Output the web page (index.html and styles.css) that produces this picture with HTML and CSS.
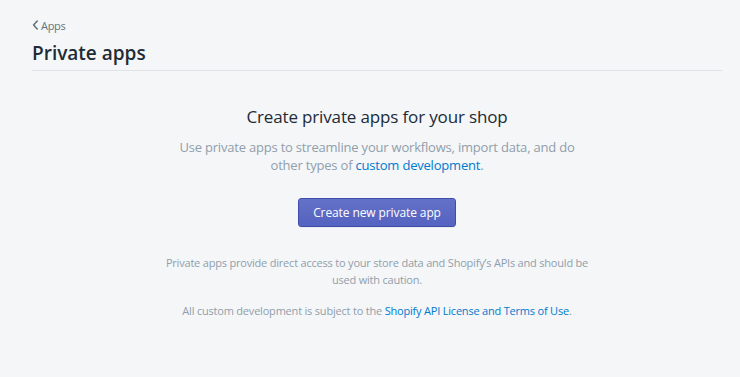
FILE: index.html
```html
<!DOCTYPE html>
<html lang="en">
<head>
<meta charset="utf-8">
<title>Private apps</title>
<link rel="stylesheet" href="styles.css">
</head>
<body>
<div class="page">
  <header class="page-header">
    <a class="breadcrumb" href="#">
      <svg class="chev" width="7" height="10" viewBox="0 0 7 10" aria-hidden="true"><path d="M5.2 1 L1.6 5 L5.2 9" fill="none" stroke="#637381" stroke-width="1.6" stroke-linecap="round" stroke-linejoin="round"/></svg>
      <span>Apps</span>
    </a>
    <h1 class="title">Private apps</h1>
  </header>
  <main class="empty">
    <h2 class="empty-title">Create private apps for your shop</h2>
    <p class="empty-lead">Use private apps to streamline your workflows, import data, and do other types of <a href="#">custom development</a>.</p>
    <button class="btn-primary" type="button">Create new private app</button>
    <p class="note">Private apps provide direct access to your store data and Shopify’s APIs and should be used with caution.</p>
    <p class="note">All custom development is subject to the <a href="#">Shopify API License and Terms of Use</a>.</p>
  </main>
</div>
</body>
</html>
```
FILE: styles.css
```css
html, body {
  margin: 0;
  padding: 0;
  background: #f4f6f8;
}
body {
  font-family: "Open Sans", "Noto Sans", sans-serif;
  color: #212b36;
}
a { color: #007ace; text-decoration: none; }
.page {
  padding: 16px 18px 0 32px;
}
.page-header {
  border-bottom: 1px solid #dfe3e8;
  padding-bottom: 4px;
}
.breadcrumb {
  display: flex;
  align-items: center;
  gap: 2px;
  color: #637381;
  font-size: 11px;
  letter-spacing: -0.3px;
  height: 18px;
}
.chev { display: block; }
.title {
  margin: 6px 0 0;
  font-size: 19px;
  font-weight: 600;
  line-height: 26px;
  color: #212b36;
}
.empty {
  display: flex;
  flex-direction: column;
  align-items: center;
  text-align: center;
  padding-top: 33px;
}
.empty-title {
  margin: 0;
  font-size: 17px;
  font-weight: 400;
  line-height: 26px;
  letter-spacing: -0.15px;
}
.empty-lead {
  margin: 8px 0 0;
  width: 410px;
  font-size: 13px;
  line-height: 18px;
  letter-spacing: -0.2px;
  color: #919eab;
}
.btn-primary {
  margin-top: 24px;
  width: 158px;
  height: 29px;
  border: 1px solid #3f4eae;
  border-radius: 3px;
  background: linear-gradient(#6371c7, #5563c1);
  box-shadow: 0 1px 0 rgba(22,29,37,0.05);
  color: #fff;
  font-family: inherit;
  font-size: 12px;
  letter-spacing: -0.1px;
}
.note {
  margin: 0;
  width: 440px;
  font-size: 11px;
  line-height: 17px;
  letter-spacing: -0.2px;
  color: #919eab;
}
.btn-primary + .note { margin-top: 27px; }
.note + .note { margin-top: 14px; }
```
